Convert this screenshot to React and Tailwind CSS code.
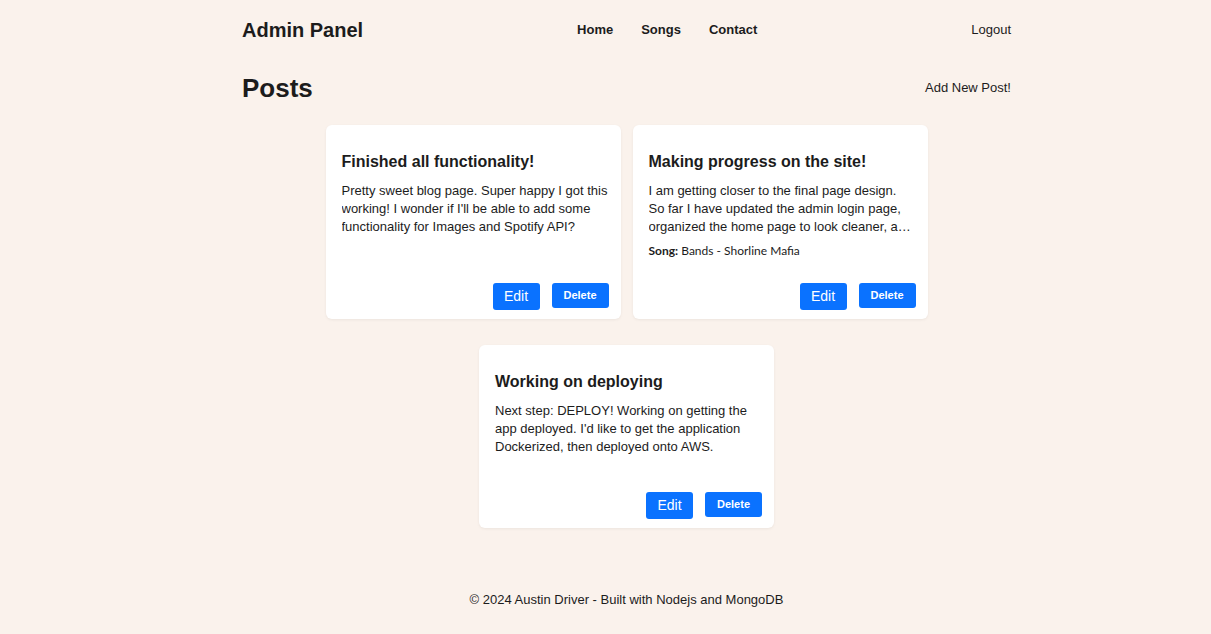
import React from 'react';

const posts = [
    {
        title: 'Finished all functionality!',
        body: "Pretty sweet blog page. Super happy I got this working! I wonder if I'll be able to add some functionality for Images and Spotify API?",
    },
    {
        title: 'Making progress on the site!',
        body: 'I am getting closer to the final page design. So far I have updated the admin login page, organized the home page to look cleaner, and added a song field to each post so I can share what I am listening to.',
        song: 'Bands - Shorline Mafia',
    },
    {
        title: 'Working on deploying',
        body: "Next step: DEPLOY! Working on getting the app deployed. I'd like to get the application Dockerized, then deployed onto AWS.",
    },
];

const PostCard = ({ post }) => (
    <div className="w-[295px] bg-white rounded-md shadow-[0_1px_3px_rgba(0,0,0,0.06)] flex flex-col pt-[27px] pl-4 pr-3 pb-[9px]">
        <div className="min-h-[97px]">
            <h3 className="text-base leading-5 font-bold text-[#1c1c1c]">{post.title}</h3>
            <p className="mt-[10px] text-[13px] leading-[18px] text-[#1c1c1c] line-clamp-3">{post.body}</p>
            {post.song && (
                <p className="mt-[6px] text-[12px] leading-[18px] text-[#1c1c1c] font-['Lato',sans-serif]">
                    <span className="font-bold">Song:</span> {post.song}
                </p>
            )}
        </div>
        <div className="mt-auto pt-[23px] flex items-start justify-end gap-3">
            <button className="w-[47px] h-[27px] rounded-[3px] bg-[#0a72ff] text-white text-[14px]">Edit</button>
            <button className="w-[57px] h-[25px] rounded-[3px] bg-[#0a72ff] text-white text-[11px] font-semibold">Delete</button>
        </div>
    </div>
);

export default function App() {
    return (
        <div className="min-h-screen bg-[#faf2ec] font-['Liberation_Sans',Arial,sans-serif] text-[#1c1c1c]">
            <div className="w-[769px] ml-[242px]">
                <header className="h-[59px] flex items-center justify-between">
                    <div className="text-[20px] font-bold">Admin Panel</div>
                    <nav className="flex items-center gap-7 text-[13px] font-bold">
                        <span>Home</span>
                        <span>Songs</span>
                        <span>Contact</span>
                    </nav>
                    <div className="text-[13px]">Logout</div>
                </header>

                <div className="h-[58px] flex items-center justify-between">
                    <h1 className="text-[26px] font-bold">Posts</h1>
                    <span className="text-[13px]">Add New Post!</span>
                </div>

                <div className="mt-[8px] flex flex-wrap justify-center gap-x-3 gap-y-[26px]">
                    {posts.map((p, i) => (
                        <PostCard key={i} post={p} />
                    ))}
                </div>

                <footer className="mt-[64px] pb-4 text-center text-[13px] leading-4">
                    © 2024 Austin Driver - Built with Nodejs and MongoDB
                </footer>
            </div>
        </div>
    );
}
